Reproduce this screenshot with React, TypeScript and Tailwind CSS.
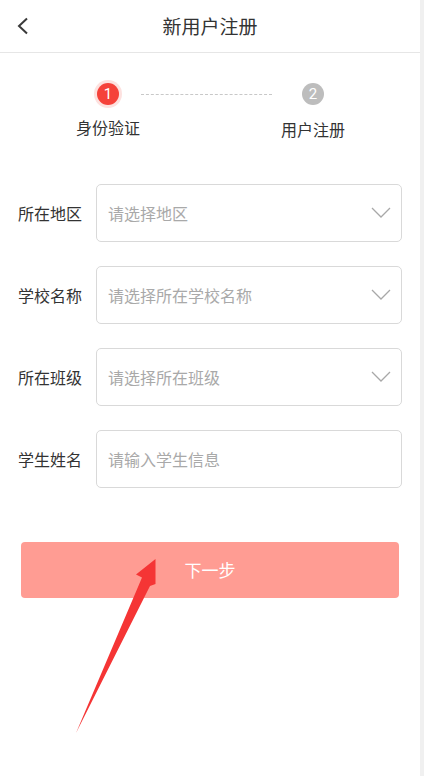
import React from "react";

const font = { fontFamily: '"Noto Sans CJK SC", "Noto Sans", sans-serif' };
const digitFont = { fontFamily: 'Roboto, "Liberation Sans", sans-serif' };

function Chevron() {
  return (
    <svg width="20" height="12" viewBox="0 0 20 12" className="shrink-0">
      <polyline points="1,1 10,10 19,1" fill="none" stroke="#a8a8a8" strokeWidth="1.3" />
    </svg>
  );
}

function Row({ label, placeholder, select }: { label: string; placeholder: string; select?: boolean }) {
  return (
    <div className="flex items-center">
      <div className="w-[96px] shrink-0 whitespace-nowrap pl-[18px] text-[16px] text-[#333] leading-none">{label}</div>
      <div className="flex h-[58px] w-[306px] shrink-0 items-center justify-between rounded-[5px] border border-[#d9d9d9] pl-[11px] pr-[10px]">
        <span className="text-[16px] text-[#a9a9a9]">{placeholder}</span>
        {select && <Chevron />}
      </div>
    </div>
  );
}

export default function App() {
  return (
    <div className="relative flex h-[776px] w-[424px] bg-white overflow-hidden" style={font}>
      <div className="flex w-[420px] flex-col">
        <div className="relative flex h-[53px] items-center justify-center border-b border-[#e6e6e6]">
          <svg className="absolute left-[16px] top-[17px]" width="14" height="18" viewBox="0 0 14 18">
            <polyline points="11,1.5 3,9 11,16.5" fill="none" stroke="#3a3a3a" strokeWidth="2" />
          </svg>
          <span className="text-[19px] text-[#333]">新用户注册</span>
        </div>

        <div className="mt-[30px] flex items-center">
          <div
            className="ml-[97px] flex h-[22px] w-[22px] items-center justify-center rounded-full bg-[#f5423a] text-[15px] leading-none text-white shadow-[0_0_0_3px_#fde1df]"
            style={digitFont}
          >
            1
          </div>
          <div className="ml-[22px] w-[131px] border-t border-dashed border-[#c8c8c8]" />
          <div
            className="ml-[30px] flex h-[22px] w-[22px] items-center justify-center rounded-full bg-[#bdbdbd] text-[15px] leading-none text-white"
            style={digitFont}
          >
            2
          </div>
        </div>
        <div className="mt-[10px] flex text-[16px] text-[#333]">
          <div className="ml-[58px] w-[100px] text-center">身份验证</div>
          <div className="ml-[105px] mt-[2px] w-[100px] text-center">用户注册</div>
        </div>

        <div className="mt-[43px] flex flex-col gap-[24px]">
          <Row label="所在地区" placeholder="请选择地区" select />
          <Row label="学校名称" placeholder="请选择所在学校名称" select />
          <Row label="所在班级" placeholder="请选择所在班级" select />
          <Row label="学生姓名" placeholder="请输入学生信息" />
        </div>

        <div className="ml-[21px] mt-[54px] flex h-[56px] w-[378px] items-center justify-center rounded-[4px] bg-[#ff9c93] text-[17px] text-white">
          下一步
        </div>
      </div>
      <div className="w-[4px] bg-[#f0f0f0]" />

      <svg className="pointer-events-none absolute left-0 top-0" width="424" height="776" viewBox="0 0 424 776">
        <polygon
          points="155.5,559 136,574.5 142,577.5 76,733 150,586 155.5,584"
          fill="#f53535"
        />
      </svg>
    </div>
  );
}
